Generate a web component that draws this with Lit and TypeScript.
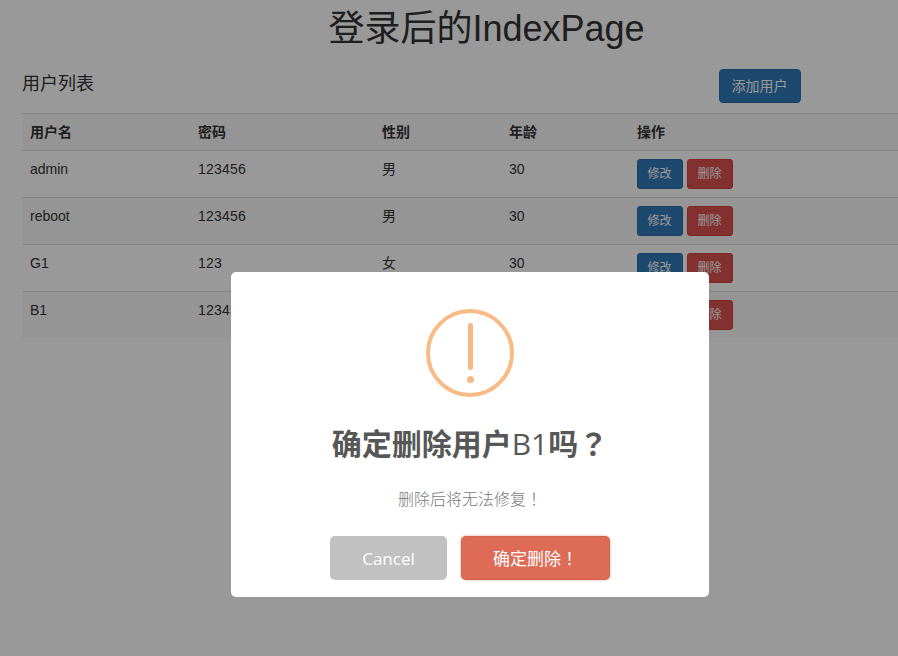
import { LitElement, html, css } from "lit";
import { customElement, property } from "lit/decorators.js";

interface User {
  name: string;
  password: string;
  gender: string;
  age: number;
}

const USERS: User[] = [
  { name: "admin", password: "123456", gender: "男", age: 30 },
  { name: "reboot", password: "123456", gender: "男", age: 30 },
  { name: "G1", password: "123", gender: "女", age: 30 },
  { name: "B1", password: "123456", gender: "女", age: 30 },
];

@customElement("user-table")
class UserTable extends LitElement {
  @property({ attribute: false }) users: User[] = [];

  static styles = css`
    :host { display: block; }
    .row {
      display: grid;
      grid-template-columns: 168px 184px 127px 128px 1fr;
      box-sizing: border-box;
      height: 47px;
      padding-top: 8px;
      border-top: 1px solid #ddd;
    }
    .row:nth-child(odd) { background: #f9f9f9; }
    .head { height: 37px; font-weight: 700; }
    .cell { padding: 0 8px; line-height: 20px; height: 20px; white-space: nowrap; }
    .password { letter-spacing: 0.2px; }
    .actions { display: flex; gap: 4px; height: 30px; }
    .btn {
      box-sizing: border-box;
      width: 46px;
      height: 30px;
      padding: 0 1px 0 0;
      border: 1px solid #2e6da4;
      border-radius: 3px;
      background: #337ab7;
      color: #fff;
      font: 12px/18px "Liberation Sans", "Noto Sans CJK SC", sans-serif;
    }
    .danger { background: #d9534f; border-color: #d43f3a; }
  `;

  render() {
    return html`
      <div class="row head">
        ${["用户名", "密码", "性别", "年龄", "操作"].map((t) => html`<div class="cell">${t}</div>`)}
      </div>
      ${this.users.map(
        (u) => html`<div class="row">
          <div class="cell">${u.name}</div>
          <div class="cell password">${u.password}</div>
          <div class="cell">${u.gender}</div>
          <div class="cell">${u.age}</div>
          <div class="cell actions">
            <button class="btn">修改</button>
            <button class="btn danger">删除</button>
          </div>
        </div>`
      )}
    `;
  }
}

@customElement("confirm-dialog")
class ConfirmDialog extends LitElement {
  static styles = css`
    :host {
      display: flex;
      flex-direction: column;
      align-items: center;
      box-sizing: border-box;
      width: 478px;
      height: 325px;
      padding-top: 37px;
      border-radius: 5px;
      background: #fff;
      font-family: "Open Sans", "Noto Sans CJK SC", sans-serif;
    }
    .icon { display: block; flex: none; }
    .title {
      margin: 27px 0 0;
      height: 40px;
      line-height: 40px;
      font-size: 30px;
      font-weight: 700;
      color: #575757;
      white-space: nowrap;
    }
    .latin { font-weight: 500; }
    .mark { font-family: "Noto Sans CJK TC", sans-serif; line-height: 1; }
    .text {
      margin: 23px 0 0;
      height: 24px;
      line-height: 24px;
      font-size: 16px;
      font-weight: 300;
      color: #797979;
      white-space: nowrap;
    }
    .buttons { display: flex; gap: 14px; margin-top: 25px; }
    .btn {
      width: 117px;
      height: 44px;
      padding: 2px 0 0;
      border: 0;
      border-radius: 5px;
      background: #c1c1c1;
      color: #fff;
      font: 17px/24px "Open Sans", "Noto Sans CJK SC", sans-serif;
      white-space: nowrap;
    }
    .confirm {
      width: 149px;
      background: #dd6b55;
      box-shadow: 0 0 2px rgba(221, 107, 85, 0.8), inset 0 0 0 1px rgba(0, 0, 0, 0.05);
    }
  `;

  render() {
    return html`
      <svg class="icon" width="88" height="88" viewBox="0 0 88 88" fill="none">
        <circle cx="44" cy="44" r="42" stroke="#f8bb86" stroke-width="4" />
        <rect x="42" y="14" width="5" height="47" rx="2.5" fill="#f8b786" />
        <circle cx="44.5" cy="70.5" r="3.5" fill="#f8b786" />
      </svg>
      <h2 class="title">确定删除用户<span class="latin">B1</span>吗<span class="mark" lang="zh-Hant">？</span></h2>
      <p class="text">删除后将无法修复<span class="mark" lang="zh-Hant">！</span></p>
      <div class="buttons">
        <button class="btn">Cancel</button>
        <button class="btn confirm">确定删除<span class="mark" lang="zh-Hant">！</span></button>
      </div>
    `;
  }
}

@customElement("app-root")
class AppRoot extends LitElement {
  static styles = css`
    :host {
      display: block;
      position: relative;
      width: 100%;
      height: 656px;
      overflow: hidden;
      background: #fff;
      color: #333;
      font: 14px/20px "Liberation Sans", "Noto Sans CJK SC", sans-serif;
    }
    .page { padding-left: 22px; }
    .heading {
      margin: 0;
      padding: 9px 0 0 53px;
      height: 40px;
      line-height: 40px;
      font-size: 36px;
      font-weight: 400;
      text-align: center;
      white-space: nowrap;
    }
    .bar {
      display: flex;
      justify-content: space-between;
      margin: 20px 97px 10px 0;
      height: 34px;
    }
    .subtitle { margin: 5px 0 0; font-size: 18px; line-height: 20px; font-weight: 400; }
    .add {
      width: 82px;
      height: 34px;
      padding: 0 1px 0 0;
      border: 1px solid #2e6da4;
      border-radius: 4px;
      background: #337ab7;
      color: #fff;
      font: 14px/20px "Liberation Sans", "Noto Sans CJK SC", sans-serif;
    }
    .overlay {
      position: absolute;
      inset: 0;
      background: rgba(0, 0, 0, 0.4);
    }
    .dialog { margin: 272px 0 0 231px; }
  `;

  render() {
    return html`
      <div class="page">
        <h1 class="heading">登录后的IndexPage</h1>
        <div class="bar">
          <h4 class="subtitle">用户列表</h4>
          <button class="add">添加用户</button>
        </div>
        <user-table .users=${USERS}></user-table>
      </div>
      <div class="overlay"><confirm-dialog class="dialog"></confirm-dialog></div>
    `;
  }
}
